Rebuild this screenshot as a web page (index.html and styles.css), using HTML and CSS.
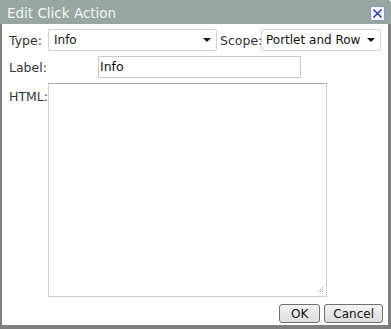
FILE: index.html
```html
<!DOCTYPE html>
<html lang="en">
<head>
    <link rel="stylesheet" href="styles.css">
    <title>Edit Click Action</title>
</head>
<body>
<div class="dialog">
    <div class="title-bar">
        <span class="title">Edit Click Action</span>
        <button class="close-button">
            <svg width="11" height="11" viewBox="0 0 11 11"><path d="M1.5 1.5 L9.5 9.5 M9.5 1.5 L1.5 9.5" stroke="#2b3f9e" stroke-width="1.6"/></svg>
        </button>
    </div>
    <div class="dialog-body">
        <div class="row">
            <span class="field-label type-label">Type:</span>
            <div class="select type-select"><span>Info</span><span class="arrow"></span></div>
            <span class="field-label scope-label">Scope:</span>
            <div class="select scope-select"><span>Portlet and Row</span><span class="arrow"></span></div>
        </div>
        <div class="row">
            <span class="field-label label-label">Label:</span>
            <div class="text-input">Info</div>
        </div>
        <div class="row html-row">
            <span class="field-label">HTML:</span>
            <div class="textarea">
                <svg class="grip" width="7" height="7" viewBox="0 0 7 7">
                    <rect x="5" y="0" width="1" height="1" fill="#a0a0a0"/>
                    <rect x="3" y="2" width="1" height="1" fill="#a0a0a0"/>
                    <rect x="5" y="2" width="1" height="1" fill="#a0a0a0"/>
                    <rect x="1" y="4" width="1" height="1" fill="#a0a0a0"/>
                    <rect x="3" y="4" width="1" height="1" fill="#a0a0a0"/>
                    <rect x="5" y="4" width="1" height="1" fill="#a0a0a0"/>
                </svg>
            </div>
        </div>
        <div class="buttons">
            <button class="dlg-button ok-button">OK</button>
            <button class="dlg-button">Cancel</button>
        </div>
    </div>
</div>
</body>
</html>
```
FILE: styles.css
```css
html, body {
  margin: 0;
  padding: 0;
  background-color: #ffffff;
}

body {
  font-family: "DejaVu Sans", "Liberation Sans", sans-serif;
  font-size: 12px;
  color: #222222;
}

.dialog {
  width: 391px;
  height: 329px;
  box-sizing: border-box;
  background-color: #7f7f7f;
  padding: 0 3px 4px 2px;
  display: flex;
  flex-direction: column;
  border-top-right-radius: 4px;
}

.title-bar {
  height: 24px;
  margin: 0 -3px 0 -2px;
  padding: 0 6px 0 7px;
  background-color: #98a6a1;
  display: flex;
  align-items: center;
  justify-content: space-between;
  border-top-right-radius: 4px;
}

.title {
  color: #f4f6f5;
  font-size: 13.5px;
  padding-top: 1px;
}

.close-button {
  width: 15px;
  height: 15px;
  padding: 0;
  margin-top: 2px;
  border: 1px solid #8a97c7;
  border-radius: 2px;
  background-color: #f4f6fb;
  display: flex;
  align-items: center;
  justify-content: center;
}

.dialog-body {
  flex: 1;
  background-color: #ffffff;
  padding: 5px 0 0 7px;
  display: flex;
  flex-direction: column;
}

.row {
  display: flex;
  align-items: center;
  margin-bottom: 5px;
}

.field-label {
  font-size: 12.5px;
  color: #333333;
}

.type-label {
  width: 39px;
}

.scope-label {
  margin-left: 3px;
  width: 41px;
}

.label-label {
  width: 89px;
}

.select {
  height: 22px;
  box-sizing: border-box;
  border: 1px solid #d3d3d3;
  border-radius: 2px;
  display: flex;
  align-items: center;
  justify-content: space-between;
  padding: 0 5px 0 5px;
  font-size: 12px;
  color: #111111;
}

.type-select {
  width: 169px;
}

.scope-select {
  width: 120px;
  padding-left: 4px;
}

.arrow {
  width: 0;
  height: 0;
  border-left: 4px solid transparent;
  border-right: 4px solid transparent;
  border-top: 4px solid #111111;
}

.text-input {
  width: 203px;
  height: 22px;
  box-sizing: border-box;
  border: 1px solid #c8c8c8;
  padding: 2px 1px;
  font-size: 12.5px;
  color: #111111;
}

.html-row {
  align-items: flex-start;
}

.html-row .field-label {
  width: 39px;
  margin-top: 6px;
}

.textarea {
  width: 279px;
  height: 214px;
  box-sizing: border-box;
  border: 1px solid #cfcfd8;
  border-top-color: #a8a8a8;
  position: relative;
}

.grip {
  position: absolute;
  right: 2px;
  bottom: 2px;
}

.buttons {
  display: flex;
  justify-content: flex-end;
  gap: 4px;
  padding-right: 5px;
  margin-top: 2px;
}

.dlg-button {
  height: 19px;
  padding: 0 8px;
  font-family: "DejaVu Sans", "Liberation Sans", sans-serif;
  font-size: 12px;
  color: #111111;
  border: 1px solid #707070;
  border-radius: 3px;
  background: linear-gradient(#f3f3f3, #dddddd);
}

.ok-button {
  padding: 0 11px;
}
```
